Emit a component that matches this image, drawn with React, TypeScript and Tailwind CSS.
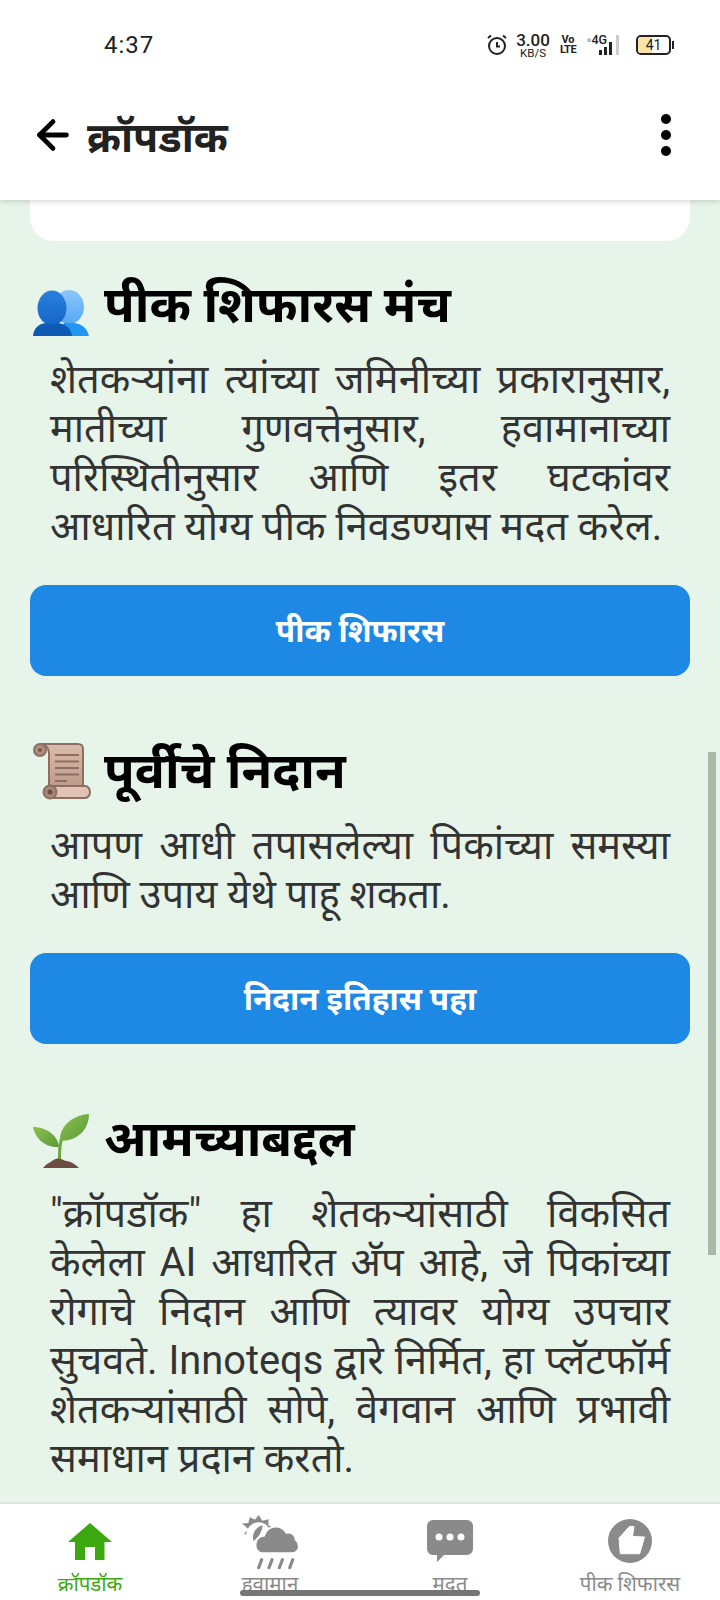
import { ArrowLeft } from "lucide-react";

const font = "font-['Roboto','Noto_Sans','Noto_Sans_Devanagari',sans-serif]";

function PeopleIcon() {
  return (
    <svg width="60" height="60" viewBox="0 -14 60 60">
      <defs>
        <linearGradient id="backHead" x1="0" y1="0" x2="0" y2="1">
          <stop offset="0" stopColor="#8cc6fa" />
          <stop offset="1" stopColor="#55a9f5" />
        </linearGradient>
        <linearGradient id="frontHead" x1="0" y1="0" x2="0" y2="1">
          <stop offset="0" stopColor="#2a80dc" />
          <stop offset="1" stopColor="#1565c8" />
        </linearGradient>
      </defs>
      <ellipse cx="37" cy="17" rx="15" ry="17" fill="url(#backHead)" />
      <path d="M32 33h10c8 1 13 5 15 13H30z" fill="#2196f3" />
      <ellipse cx="20" cy="18" rx="14.500" ry="17.500" fill="url(#frontHead)" />
      <path d="M14 33c4 2 8 2 12 0 8 1 13 5 14 13H1c1-8 5-12 13-13z" fill="#0d5bb5" />
    </svg>
  );
}

function ScrollIcon() {
  return (
    <svg width="60" height="60" viewBox="0 0 60 60">
      <defs>
        <linearGradient id="paper" x1="0" y1="0" x2="0" y2="1">
          <stop offset="0" stopColor="#dcbcac" />
          <stop offset="1" stopColor="#bd9a8a" />
        </linearGradient>
      </defs>
      <path d="M8 2h38c3 0 5 2 5 5v38H17V11c0-4-3-9-9-9z" fill="url(#paper)" stroke="#8d6e63" strokeWidth="2" />
      <circle cx="8" cy="8" r="6" fill="#b08e7f" stroke="#8d6e63" strokeWidth="2" />
      <circle cx="8" cy="8" r="2" fill="#7a5a4e" />
      <path d="M23 13h24M23 19.500h24M23 26h24M23 32.500h24M23 39h12" stroke="#8d6e63" strokeWidth="2" />
      <path d="M17 44h36c3 0 5 3 5 6s-2 6-5 6H17z" fill="#e0c3b4" stroke="#8d6e63" strokeWidth="2" />
      <circle cx="18" cy="50" r="6.500" fill="#a98676" stroke="#8d6e63" strokeWidth="2" />
      <circle cx="18" cy="50" r="2.500" fill="#6d4c41" />
    </svg>
  );
}

function SproutIcon() {
  return (
    <svg width="60" height="60" viewBox="0 0 60 60">
      <defs>
        <linearGradient id="leaf" x1="0" y1="0" x2="1" y2="1">
          <stop offset="0" stopColor="#8cc152" />
          <stop offset="1" stopColor="#5a9a35" />
        </linearGradient>
      </defs>
      <path d="M26 50c0-8 0-14 2-22l3 1c-2 7-2 14-2 21z" fill="#6da53d" />
      <path d="M27 37C26 26 15 17 1 17c2 11 12 21 26 20z" fill="url(#leaf)" />
      <path d="M28 31C27 17 40 5 57 4c0 15-11 27-29 27z" fill="url(#leaf)" />
      <path d="M11 58c3-4 6-5 9-7 3-2 5-3 8-2 3 0 4 2 7 2 5 1 9 4 12 7z" fill="#6d4c41" />
    </svg>
  );
}

function Section({ icon, title, lines, button }: { icon: React.ReactNode; title: string; lines: string; button?: string }) {
  return (
    <section className="flex flex-col">
      <div className="flex h-[60px] items-center">
        <div className="ml-[2px] flex w-[60px] shrink-0 justify-center">{icon}</div>
        <h2 className="ml-[12px] pb-[3px] text-[50px] font-bold leading-[60px] text-black">{title}</h2>
      </div>
      <p className="mt-[19px] px-5 text-justify text-[39.8px] leading-[49px] text-[#333333]">{lines}</p>
      {button && (
        <button className="mt-[34px] h-[91px] w-full rounded-[16px] bg-[#1e88e5] pt-[3px] text-[31.5px] font-bold text-white">
          {button}
        </button>
      )}
    </section>
  );
}

function NavItem({ icon, label, active }: { icon: React.ReactNode; label: string; active?: boolean }) {
  return (
    <div className="flex flex-1 flex-col items-center">
      <div className="flex h-[56px] items-center justify-center">{icon}</div>
      <span className={`mt-[3px] text-[20.5px] leading-[24px] ${active ? "text-[#3ca80f]" : "text-[#8a8a8a]"}`}>{label}</span>
    </div>
  );
}

export default function App() {
  return (
    <div className={`relative flex h-[1600px] w-[720px] flex-col overflow-hidden bg-[#e6f4e9] ${font}`}>
      <header className="relative z-10 h-[200px] shrink-0 bg-white shadow-[0_1px_6px_rgba(0,0,0,0.18)]">
        <div className="flex h-[90px] items-center justify-between pl-[104px] pr-[46px]">
          <span className="text-[24px] tracking-[1px] text-[#222222]">4:37</span>
          <div className="flex items-center text-[#222222]">
            <svg width="22" height="22" viewBox="0 0 22 22" fill="none" stroke="#222" strokeWidth="2">
              <circle cx="11" cy="12" r="8" />
              <path d="M11 8v4.500h3M2 4l3-2.500M20 4l-3-2.500" />
            </svg>
            <div className="ml-[8px] flex w-[34px] flex-col items-center">
              <span className="text-[17px] font-medium leading-[14px]">3.00</span>
              <span className="mt-[1px] text-[11.5px] leading-[10px]">KB/S</span>
            </div>
            <div className="ml-[10px] flex w-[16px] flex-col items-center text-[11px] font-bold leading-[10px]">
              <span>Vo</span>
              <span className="tracking-[-0.5px]">LTE</span>
            </div>
            <div className="relative ml-[11px] flex h-[20px] w-[35px] items-end gap-[2px]">
              <span className="absolute left-0 top-[-1px] text-[12.5px] font-medium leading-[12px]">◦4G</span>
              <span className="ml-[12px] h-[5px] w-[3px] bg-[#222222]" />
              <span className="h-[8px] w-[3px] bg-[#222222]" />
              <span className="h-[13px] w-[3px] bg-[#222222]" />
              <span className="ml-[2px] h-[20px] w-[3px] bg-[#cccccc]" />
            </div>
            <div className="relative ml-[14px] flex h-[20px] w-[35px] items-center overflow-hidden rounded-[5px] border-2 border-[#222222]">
              <span className="h-full w-[14px] bg-[#f9e3a6]" />
              <span className="absolute inset-0 text-center text-[14px] leading-[16px]">41</span>
            </div>
            <span className="ml-px h-[8px] w-[2px] bg-[#222222]" />
          </div>
        </div>
        <div className="flex h-[90px] items-center justify-between pl-[30px] pr-[49px]">
          <div className="flex items-center gap-[11px]">
            <ArrowLeft size={46} strokeWidth={2.5} className="text-black" />
            <span className="pt-[6px] text-[41px] font-bold leading-[52px] text-[#222222]">क्रॉपडॉक</span>
          </div>
          <div className="flex flex-col gap-[6px]">
            <span className="h-[10px] w-[10px] rounded-full bg-black" />
            <span className="h-[10px] w-[10px] rounded-full bg-black" />
            <span className="h-[10px] w-[10px] rounded-full bg-black" />
          </div>
        </div>
      </header>

      <main className="flex min-h-0 flex-1 flex-col overflow-hidden px-[30px]">
        <div className="h-[41px] shrink-0 rounded-b-[24px] bg-white" />
        <div className="mt-[35px] flex flex-col gap-[66px]">
          <Section
            icon={<PeopleIcon />}
            title="पीक शिफारस मंच"
            lines="शेतकऱ्यांना त्यांच्या जमिनीच्या प्रकारानुसार, मातीच्या गुणवत्तेनुसार, हवामानाच्या परिस्थितीनुसार आणि इतर घटकांवर आधारित योग्य पीक निवडण्यास मदत करेल."
            button="पीक शिफारस"
          />
          <Section
            icon={<ScrollIcon />}
            title="पूर्वीचे निदान"
            lines="आपण आधी तपासलेल्या पिकांच्या समस्या आणि उपाय येथे पाहू शकता."
            button="निदान इतिहास पहा"
          />
          <Section
            icon={<SproutIcon />}
            title="आमच्याबद्दल"
            lines={'"क्रॉपडॉक" हा शेतकऱ्यांसाठी विकसित केलेला AI आधारित अ‍ॅप आहे, जे पिकांच्या रोगाचे निदान आणि त्यावर योग्य उपचार सुचवते. Innoteqs द्वारे निर्मित, हा प्लॅटफॉर्म शेतकऱ्यांसाठी सोपे, वेगवान आणि प्रभावी समाधान प्रदान करतो.'}
          />
        </div>
      </main>

      <nav className="flex h-[98px] shrink-0 border-t-2 border-[#dfe5df] bg-white pt-[9px]">
        <NavItem
          active
          label="क्रॉपडॉक"
          icon={
            <svg width="44" height="37" viewBox="0 0 44 37" fill="#3ca80f">
              <path d="M22 0 44 19H36.500V37H27V24H17V37H7V19H0z" />
            </svg>
          }
        />
        <NavItem
          label="हवामान"
          icon={
            <svg width="60" height="55" viewBox="0 0 58 53" fill="#8a8a8a">
              <path d="M18 0l3.500 5.500 6-1.500 0 6 6 2.500-5 4 1 6-6 0-3 6-4-4-6 2-.5-6-6-2.500 4-4.500L2 8l6-.5L9.500 2l5 2.500z" transform="translate(0 1)" />
              <circle cx="18" cy="20" r="12" fill="#fff" />
              <path d="M13 26c-2-6 2-14 9-15-1 6-4 12-9 15z" />
              <path d="M21 38a8 8 0 0 1-6-9c0-5 4-8 8-8 2-6 7-9 12-9 5 0 8 3 10 6 6-1 9 3 9 7 2 1 3 5 3 7 0 4-4 6-7 6z" stroke="#fff" strokeWidth="2" />
              <path d="M18 52l3-8M28 52l3-8M38 52l3-8M48 52l3-8" stroke="#8a8a8a" strokeWidth="3" strokeLinecap="round" />
            </svg>
          }
        />
        <NavItem
          label="मदत"
          icon={
            <svg width="46" height="42" viewBox="0 0 46 42" fill="#8a8a8a">
              <path d="M6 0h34a6 6 0 0 1 6 6v23a6 6 0 0 1-6 6H17l-7 7v-7H6a6 6 0 0 1-6-6V6a6 6 0 0 1 6-6z" />
              <circle cx="12" cy="17" r="3.500" fill="#fff" />
              <circle cx="23" cy="17" r="3.500" fill="#fff" />
              <circle cx="34" cy="17" r="3.500" fill="#fff" />
            </svg>
          }
        />
        <NavItem
          label="पीक शिफारस"
          icon={
            <svg width="44" height="44" viewBox="0 0 44 44">
              <circle cx="22" cy="22" r="22" fill="#8a8a8a" />
              <path d="M11 19 21.500 7.500H26L24.500 17.500 36.500 18 31.700 34.700H12.300z" fill="#fff" stroke="#fff" strokeWidth="1" strokeLinejoin="round" />
            </svg>
          }
        />
      </nav>

      <div className="absolute bottom-[4px] left-[240px] h-[6px] w-[240px] rounded-full bg-[#757575]" />
      <div className="absolute left-[708px] top-[752px] h-[503px] w-[8px] bg-[#a8b8a8]" />
    </div>
  );
}
